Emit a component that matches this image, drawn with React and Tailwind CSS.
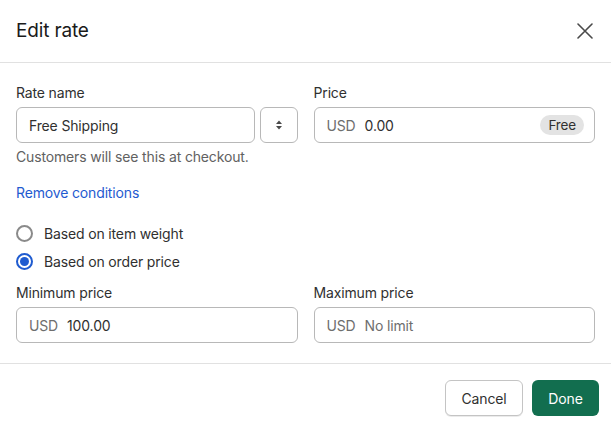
import React from "react";

function Field({ prefix, value, placeholder, badge }) {
  return (
    <div className="flex h-9 items-center rounded-[6px] border border-[#b8b8b8] bg-white pl-3 pr-[10px]">
      <span className="text-[14px] text-[#6e6e6e]">{prefix}</span>
      <span className={"ml-[9px] flex-1 text-[14px] " + (value ? "text-[#303030]" : "text-[#6e6e6e]")}>
        {value || placeholder}
      </span>
      {badge && (
        <span className="flex h-5 items-center rounded-full bg-[#e3e3e3] px-[8px] text-[13.5px] text-[#303030]">
          {badge}
        </span>
      )}
    </div>
  );
}

function Radio({ checked, label }) {
  return (
    <label className="flex h-7 items-center gap-[11px]">
      <span
        className={
          "flex h-[17px] w-[17px] items-center justify-center rounded-full border-2 " +
          (checked ? "border-[#1f5bd0]" : "border-[#8a8a8a]")
        }
      >
        {checked && <span className="h-[9px] w-[9px] rounded-full bg-[#1f5bd0]" />}
      </span>
      <span className="text-[14px] text-[#303030]">{label}</span>
    </label>
  );
}

export default function App() {
  return (
    <div
      className="h-[428px] w-[611px] overflow-hidden bg-white text-[#303030] tracking-[-0.15px]"
      style={{ fontFamily: "Inter, 'Noto Sans', sans-serif" }}
    >
      <div className="flex h-[63px] items-center justify-between border-b border-[#e1e1e1] px-4">
        <h1 className="text-[19px] font-normal text-[#1a1a1a]">Edit rate</h1>
        <svg width="16" height="16" viewBox="0 0 16 16" className="mr-[2px]">
          <path d="M1 1L15 15M15 1L1 15" stroke="#4a4a4a" strokeWidth="1.6" strokeLinecap="round" />
        </svg>
      </div>

      <div className="border-b border-[#e1e1e1] px-4 pt-5 pb-5">
        <div className="grid grid-cols-2 gap-4">
          <div>
            <div className="mb-1 text-[14px] leading-5">Rate name</div>
            <div className="flex gap-[5px]">
              <div className="flex h-9 flex-1 items-center rounded-[6px] border border-[#b8b8b8] px-3 text-[14px]">
                Free Shipping
              </div>
              <div className="flex h-9 w-[38px] items-center justify-center rounded-[6px] border border-[#b8b8b8]">
                <svg width="8" height="10" viewBox="0 0 8 10">
                  <path d="M4 0.5L7 4H1Z M4 9.5L7 6H1Z" fill="#4a4a4a" />
                </svg>
              </div>
            </div>
            <div className="mt-1 text-[14px] leading-5 text-[#616161]">Customers will see this at checkout.</div>
          </div>
          <div>
            <div className="mb-1 text-[14px] leading-5">Price</div>
            <Field prefix="USD" value="0.00" badge="Free" />
          </div>
        </div>

        <div className="mt-4 text-[14px] leading-5 text-[#1f5bd0]">Remove conditions</div>

        <div className="mt-[16px] flex flex-col">
          <Radio label="Based on item weight" />
          <Radio checked label="Based on order price" />
        </div>

        <div className="mt-[8px] grid grid-cols-2 gap-4">
          <div>
            <div className="mb-1 text-[14px] leading-5">Minimum price</div>
            <Field prefix="USD" value="100.00" />
          </div>
          <div>
            <div className="mb-1 text-[14px] leading-5">Maximum price</div>
            <Field prefix="USD" placeholder="No limit" />
          </div>
        </div>
      </div>

      <div className="flex justify-end gap-[9px] px-3 pt-4">
        <button className="flex h-9 w-[78px] items-center justify-center rounded-[6px] border border-[#c4c4c4] bg-white text-[14px] text-[#303030] shadow-[0_1px_0_rgba(0,0,0,0.08)]">
          Cancel
        </button>
        <button className="flex h-9 w-[67px] items-center justify-center rounded-[6px] bg-[#126e4f] text-[14px] text-white">
          Done
        </button>
      </div>
    </div>
  );
}
